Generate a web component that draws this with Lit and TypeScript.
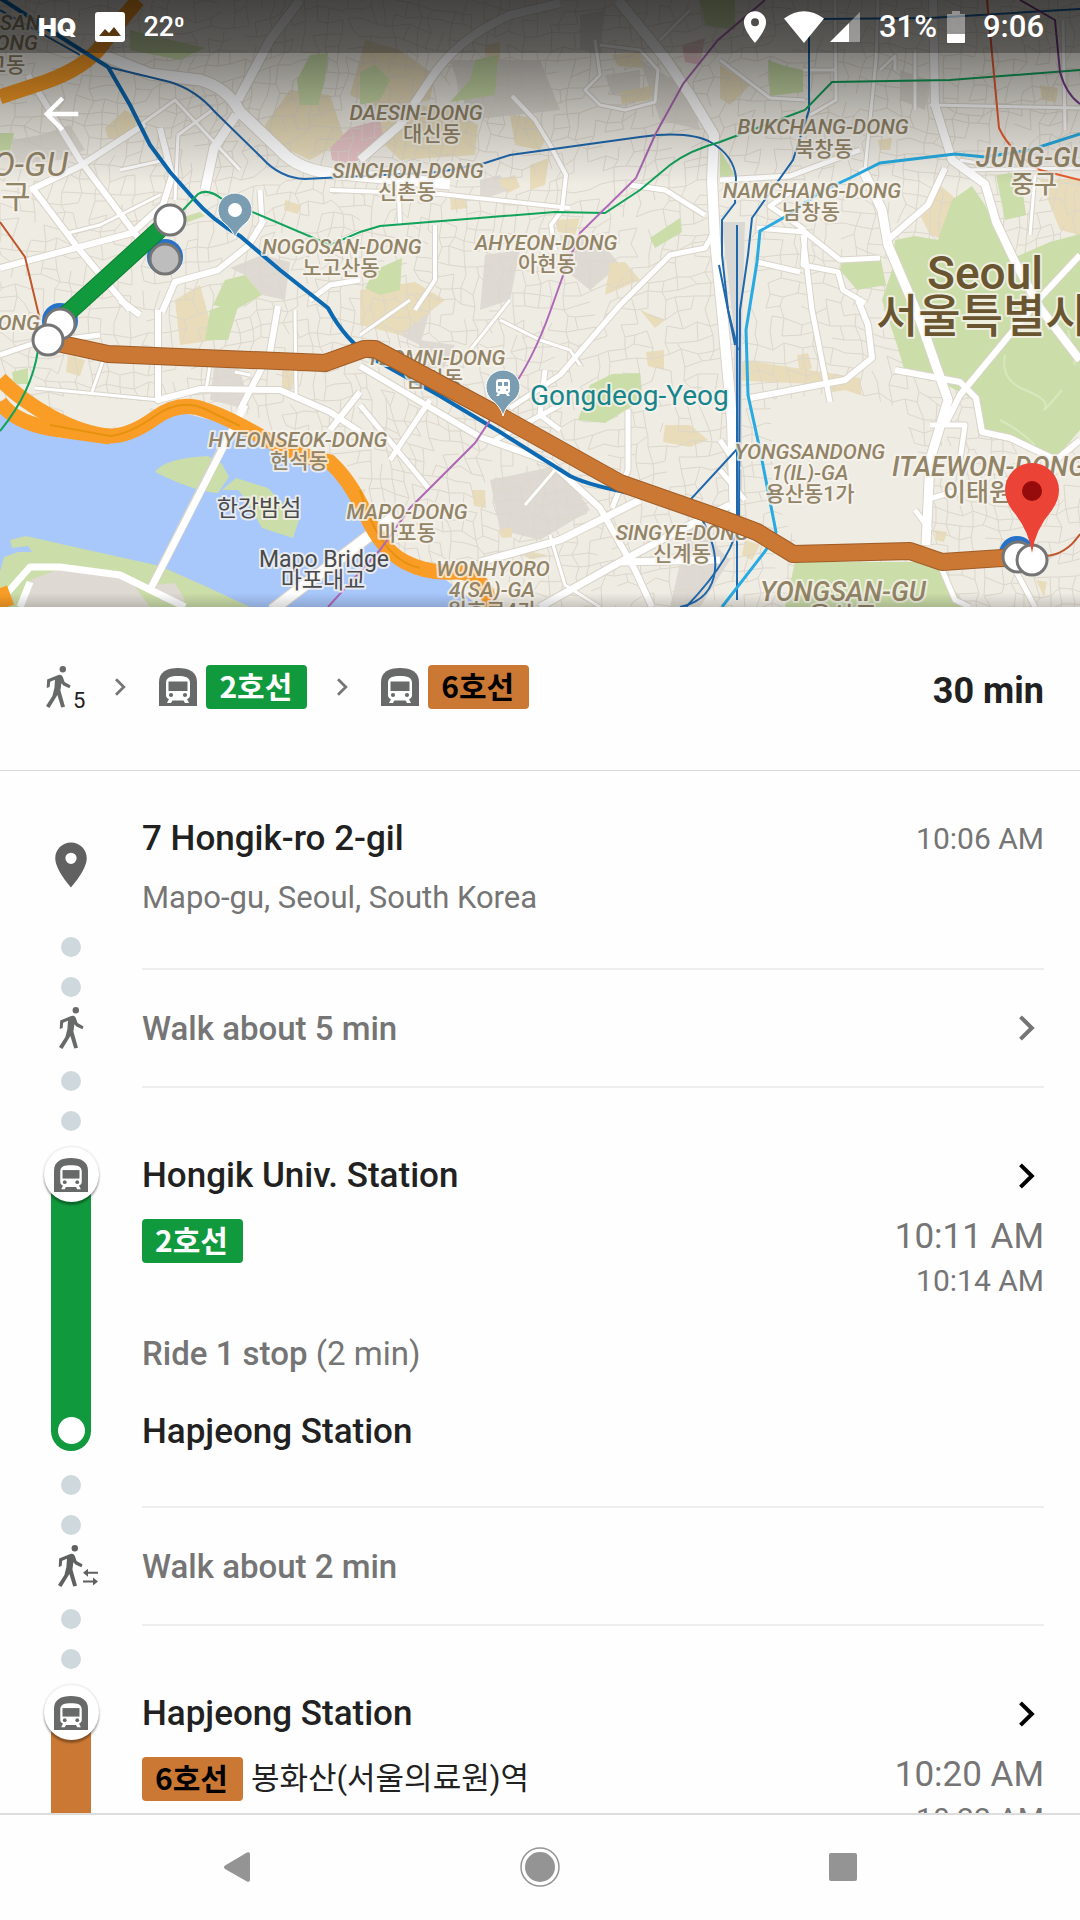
import { LitElement, html, svg, css, nothing } from "lit";
import { customElement, property } from "lit/decorators.js";

type Line = { name: string; tone: "green" | "orange" };
type Walk = { kind: "walk"; label: string; transfer: boolean; details: boolean };
type Ride = {
  kind: "ride";
  from: string;
  line: Line;
  headsign?: string;
  times: [string, string];
  stops?: string;
  duration?: string;
  to?: string;
};

const LINE_2: Line = { name: "2호선", tone: "green" };
const LINE_6: Line = { name: "6호선", tone: "orange" };

const STEPS: (Walk | Ride)[] = [
  { kind: "walk", label: "Walk about 5 min", transfer: false, details: true },
  {
    kind: "ride",
    from: "Hongik Univ. Station",
    line: LINE_2,
    times: ["10:11 AM", "10:14 AM"],
    stops: "Ride 1 stop",
    duration: "(2 min)",
    to: "Hapjeong Station",
  },
  { kind: "walk", label: "Walk about 2 min", transfer: true, details: false },
  {
    kind: "ride",
    from: "Hapjeong Station",
    line: LINE_6,
    headsign: "봉화산(서울의료원)역",
    times: ["10:20 AM", "10:22 AM"],
  },
];

const WALKER = svg`
  <circle cx="16.8" cy="3.2" r="3.2"></circle>
  <path d="M1.2 13.4 11 9.4Q15.6 7.8 16.8 11L18.6 16 24.6 19.6 23.4 22.2 17.4 19.4 15.4 17.2 14.4 24.6 19 40.8 15.2 41.4 11.4 29 3.4 42 0 40 6.4 30 8.4 22 9 13.8 4.2 15.8 3.6 21 .7 22Z"></path>`;

const walkIcon = html`<svg class="walker" viewBox="0 0 25 42" aria-hidden="true">${WALKER}</svg>`;

const transferIcon = html`<svg class="walker transfer" viewBox="0 0 40 42" aria-hidden="true">
  ${WALKER}
  <path d="M25 27.8 30 23.8V26.8H40V28.8H30V31.8ZM40 36.4 35 32.4V35.4H25V37.4H35V40.4Z"></path>
</svg>`;

const trainIcon = html`<svg class="train" viewBox="0 0 38 38" aria-hidden="true">
  <path d="M0 38V14C0 4 8 0 19 0S38 4 38 14V38Z"></path>
  <path class="cut" d="M7 27V15C7 9 12 8 19 8S31 9 31 15V27Q31 30 28 31L30 35H26L24.600 32.400H13.400L12 35H8L10 31Q7 30 7 27Z"></path>
  <rect x="9.500" y="13.500" width="19" height="9.500"></rect>
  <circle cx="12" cy="27" r="2.100"></circle>
  <circle cx="26" cy="27" r="2.100"></circle>
</svg>`;

const chevron = html`<svg class="chevron" viewBox="0 0 16 26" aria-hidden="true">
  <path d="M1.500 1.800 12.800 13 1.500 24.200"></path>
</svg>`;

const placePath =
  "M12 2C8.130 2 5 5.130 5 9c0 5.250 7 13 7 13s7-7.750 7-13c0-3.870-3.130-7-7-7zm0 9.500a2.500 2.500 0 1 1 0-5 2.500 2.500 0 0 1 0 5z";

/* Minor streets: a jittered lattice with some links left out. */
function minorStreets(): string {
  let seed = 7;
  const rnd = () => {
    seed = (seed * 16807) % 2147483647;
    return seed / 2147483647;
  };
  const step = 13;
  const cols = 90;
  const rows = 52;
  const pts: [number, number][][] = [];
  for (let r = 0; r < rows; r++) {
    pts.push([]);
    for (let c = 0; c < cols; c++) {
      const x = c * step - 30;
      const y = r * step - 30;
      const bend = Math.sin(x / 120) * 18 + Math.cos(y / 90) * 12;
      pts[r].push([
        Math.round(x + bend + (rnd() - 0.5) * 8),
        Math.round(y + Math.sin(x / 70) * 14 + (rnd() - 0.5) * 8),
      ]);
    }
  }
  let d = "";
  for (let r = 0; r < rows - 1; r++) {
    for (let c = 0; c < cols - 1; c++) {
      const [x, y] = pts[r][c];
      if (rnd() < 0.72) d += `M${x} ${y}L${pts[r][c + 1][0]} ${pts[r][c + 1][1]}`;
      if (rnd() < 0.72) d += `M${x} ${y}L${pts[r + 1][c][0]} ${pts[r + 1][c][1]}`;
    }
  }
  return d;
}

const STREETS = minorStreets();

const BLOCKS = [
  "M40 135 70 125 85 150 60 160 10 165 12 140Z",
  "M230 268 262 255 290 262 285 300 262 295 245 275Z",
  "M580 15 605 10 600 55 580 50Z",
  "M605 75 640 70 640 90 612 95Z",
  "M485 255 520 250 510 300 480 310Z",
  "M560 235 600 240 620 265 590 290 565 270Z",
  "M450 60 470 120 560 110 540 60Z",
  "M480 180 500 175 510 190 480 200Z",
  "M215 360 240 370 250 410 210 400Z",
  "M420 340 455 345 440 375 415 370Z",
  "M490 480 560 465 590 510 540 540 500 530Z",
  "M385 300 430 310 420 345 390 330Z",
  "M900 70 930 80 925 110 900 100Z",
  "M640 60 690 90 700 130 660 120Z",
  "M690 520 730 560 700 607 670 607Z",
];

const TAN = [
  "M105 128 125 110 138 118 130 138 108 138Z",
  "M290 90 330 95 345 140 310 160 268 140 265 125Z",
  "M365 40 400 50 435 75 430 100 385 110 350 95Z",
  "M372 125 420 105 450 110 478 125 475 155 400 160 380 140Z",
  "M485 45 500 42 500 62 487 60Z",
  "M510 115 535 118 548 135 540 150 515 145Z",
  "M530 165 549 158 545 185 530 190 530 178Z",
  "M498 180 515 175 520 187 508 193Z",
  "M450 197 465 199 468 208 451 210Z",
  "M555 220 580 218 575 235 558 232Z",
  "M612 55 640 52 643 68 618 66Z",
  "M620 92 655 85 650 100 622 104Z",
  "M720 65 750 85 730 105 720 98Z",
  "M940 185 957 200 945 240 930 235 920 215Z",
  "M1040 180 1080 178 1080 235 1060 230Z",
  "M1040 85 1058 88 1056 102 1042 100Z",
  "M878 140 892 138 890 150 880 150Z",
  "M175 300 200 285 215 340 180 345Z",
  "M360 290 415 282 445 300 400 335 360 325Z",
  "M285 200 301 205 298 214 284 210Z",
  "M282 370 298 372 290 392 282 388Z",
  "M68 355 85 360 80 376 66 372Z",
  "M640 310 665 320 655 328Z",
  "M646 352 664 350 664 370 648 366Z",
  "M665 425 690 425 708 440 690 447 663 442Z",
  "M730 380 745 360 860 378 862 400 850 408 832 398 830 385Z",
  "M797 355 808 353 812 368 800 374Z",
  "M890 425 905 428 903 440 893 437Z",
  "M472 490 485 490 486 508 474 506Z",
  "M498 530 512 527 512 537 502 538Z",
  "M520 550 548 555 530 560Z",
  "M935 530 947 532 944 542 936 540Z",
  "M1036 580 1047 582 1044 597Z",
  "M745 540 760 545 752 560 742 555Z",
  "M610 263 625 262 640 280 605 295Z",
];

const PARKS = [
  "M895 240 915 236 938 240 952 200 972 186 985 205 1000 240 1018 256 1050 242 1080 234 1080 430 1056 458 1030 445 1000 433 982 430 972 398 940 382 905 372 897 345 882 300 892 270Z",
  "M795 562 930 562 945 575 965 607 785 607Z",
  "M130 30 205 48 180 60 130 50Z",
  "M310 55 328 53 325 80 318 105 300 105 297 80Z",
  "M225 280 245 275 262 295 235 310 213 305Z",
  "M360 72 375 65 390 80 380 100 360 105Z",
  "M475 60 498 55 495 95 450 102 470 80Z",
  "M375 270 402 258 400 290 380 295 365 288Z",
  "M650 238 680 218 682 232 655 248Z",
  "M700 0 735 0 735 30 705 25Z",
  "M768 60 785 66 803 70 803 92 770 96Z",
  "M842 262 880 255 886 285 857 290 840 270Z",
  "M996 175 1020 172 1026 215 1005 220Z",
  "M590 385 612 374 640 373 642 400 605 423 578 420Z",
  "M0 133 14 133 10 152 0 152Z",
  "M12 372 28 368 28 384 14 384Z",
  "M210 310 240 300 228 340 205 340Z",
  "M720 150 735 175 720 178Z",
  "M180 218 200 212 205 216 188 222Z",
];

const ROADS: [number, string][] = [
  [11, "M95 52 150 74 200 80Q228 88 240 112L280 150Q300 172 340 174L450 184"],
  [9, "M238 100 270 40 300 0M236 115 214 148 205 190"],
  [6, "M28 75 80 160 140 240M30 190 80 166 145 124M34 190 78 248 130 310"],
  [6, "M0 268 72 249 132 233 163 205 172 176 160 128M162 312 175 282 218 270 248 246 264 220"],
  [3, "M140 125 175 100 240 170M178 135 215 108M120 170 165 160M178 135 175 200M68 233 100 225 160 195"],
  [8, "M360 160 400 125 430 80Q455 40 510 15L560 3"],
  [10, "M618 0 665 58 690 95 714 135 712 180 715 240 722 310 732 420 735 520"],
  [4, "M512 96 535 120 550 145 566 175 562 210 551 225 555 250"],
  [4, "M330 190 440 194 570 208M398 170 400 224M435 225 435 280 415 310M330 245 360 232"],
  [5, "M630 185 665 190 705 215M714 232 705 248 670 255 620 305 560 375 510 408"],
  [3, "M595 40 600 75 585 90 600 105 625 110 655 102 658 70 640 50 600 45M660 40 690 10"],
  [8, "M933 0 935 105 952 160 985 184 996 222 1015 262 1040 308 1080 360"],
  [9, "M862 168 882 210 888 245 920 320 948 400 930 460 926 545"],
  [6, "M890 238 928 205 945 168M1080 255 1040 298 960 395 945 425"],
  [5, "M720 180 790 176 860 150M805 230 770 206 800 185M757 228 805 232 840 260 880 258"],
  [3, "M835 0 836 100 810 115M878 0 876 60 865 170M915 50 915 110M960 170 1080 168M1063 20 1065 130M930 105 1080 108"],
  [3, "M720 60 770 98 805 100M880 70 895 56 895 70M803 70 835 70M960 160 990 165M1035 175 1030 235"],
  [6, "M895 370 960 382 976 398 982 432 1010 438 1056 460 1080 440M750 398 845 380 872 358 868 325 858 300"],
  [5, "M803 235 812 310 830 402M805 232 803 265 838 272 843 290 865 303M757 262 800 272"],
  [6, "M360 366 480 437 550 462 600 508 635 570 652 607"],
  [7, "M540 607 620 562 680 530 730 505M480 562 560 540 640 500M620 562 720 560"],
  [5, "M495 440 560 405M628 410 628 470 612 508M545 370 540 415 560 430M360 405 430 490M390 460 430 400"],
  [3, "M550 535 565 585 600 607M525 505 555 470M360 335 410 300M510 300 470 350M500 320 540 340 570 350 580 365"],
  [6, "M158 310 158 400 200 389 280 390 330 412 360 432M278 306 270 352 240 410M120 300 140 315M360 392 330 430"],
  [3, "M105 355 92 392M35 388 160 400M295 310 296 395M210 365 206 390M250 375 235 372"],
  [5, "M0 355 35 343 100 335M720 470 745 500M925 500 960 490M930 530 915 510M938 560 955 600 970 607M1010 560 1035 607"],
  [5, "M930 425 965 425 960 460M720 440 740 470M260 190 262 222M310 300 330 285 360 280"],
];

const LABELS: [string, number, number, string][] = [
  ["DAESIN-DONG", 416, 120, "small"],
  ["대신동", 432, 141, "hangul"],
  ["SINCHON-DONG", 408, 178, "small"],
  ["신촌동", 407, 199, "hangul"],
  ["NOGOSAN-DONG", 342, 254, "small"],
  ["노고산동", 341, 275, "hangul"],
  ["AHYEON-DONG", 546, 250, "small"],
  ["아현동", 547, 271, "hangul"],
  ["BUKCHANG-DONG", 823, 134, "small"],
  ["북창동", 824, 156, "hangul"],
  ["NAMCHANG-DONG", 812, 198, "small"],
  ["남창동", 811, 219, "hangul"],
  ["JUNG-GU", 1032, 167, "mid"],
  ["중구", 1034, 193, "hangul mid-hangul"],
  ["DONG", 12, 330, "small"],
  ["SAN", 20, 30, "small"],
  ["DONG", 10, 50, "small"],
  ["교동", 6, 72, "hangul"],
  ["YEOMNI-DONG", 436, 365, "small"],
  ["염리동", 434, 386, "hangul"],
  ["HYEONSEOK-DONG", 298, 447, "small"],
  ["현석동", 299, 468, "hangul"],
  ["MAPO-DONG", 407, 519, "small"],
  ["마포동", 407, 540, "hangul"],
  ["WONHYORO", 493, 576, "small"],
  ["4(SA)-GA", 492, 597, "small"],
  ["원효로4가", 492, 618, "hangul"],
  ["SINGYE-DONG", 682, 540, "small"],
  ["신계동", 682, 561, "hangul"],
  ["YONGSANDONG", 810, 459, "small"],
  ["1(IL)-GA", 810, 480, "small"],
  ["용산동1가", 810, 501, "hangul"],
  ["YONGSAN-GU", 843, 601, "mid"],
  ["용산구", 843, 625, "hangul mid-hangul"],
  ["ITAEWON-DONG", 989, 476, "mid"],
  ["이태원동", 989, 501, "hangul mid-hangul"],
];

@customElement("route-map")
export class RouteMap extends LitElement {
  static styles = css`
    :host { display: block; }
    .map {
      display: block;
      width: 100%;
      aspect-ratio: 1080 / 607;
      background: #efece4;
      font-family: Roboto, "Noto Sans CJK KR", sans-serif;
    }
    .fine { fill: none; stroke: #ddd7cc; stroke-width: 1; }
    .block { fill: #dedad3; }
    .tan { fill: #e8dcba; }
    .park { fill: #cbdda9; }
    .bank { fill: #cbdda9; }
    .trail { fill: none; stroke: #d8e8bd; stroke-width: 2; }
    .water { fill: #a8c7fb; }
    .casing { fill: none; stroke: #d9d4ca; stroke-linejoin: round; }
    .road { fill: none; stroke: #ffffff; stroke-linejoin: round; }
    .highway { fill: none; stroke: #fa9d27; stroke-width: 15; }
    .edge { fill: none; stroke: #e5920f; stroke-width: 2; }
    .rail { fill: none; stroke: #1f68ad; stroke-width: 2; }
    .main { stroke: #0c6ab3; stroke-width: 4; }
    .cyan { stroke: #27abe2; stroke-width: 3; }
    .leaf { stroke: #12a35b; }
    .violet { stroke: #ae69b6; }
    .plum { stroke: #7c3f8a; }
    .rust { stroke: #c0562c; }
    .flame { stroke: #ea5c30; }
    .label { fill: #928467; stroke: #f7f4ee; stroke-width: 4; stroke-opacity: 0.8; paint-order: stroke; text-anchor: middle; stroke-linejoin: round; }
    .small { font-size: 21px; font-style: italic; font-weight: 500; }
    .hangul { font-size: 21px; font-weight: 500; }
    .mid { font-size: 27px; font-style: italic; font-weight: 500; }
    .mid-hangul { font-size: 25px; }
    .gu { font-size: 34px; font-style: italic; }
    .gu-hangul { font-size: 32px; }
    .city { font-size: 46px; font-weight: 500; fill: #695530; }
    .city-hangul { font-size: 46px; text-anchor: start; }
    .place { font-size: 23px; fill: #4a4a4d; }
    .stop { font-size: 28px; fill: #16858c; text-anchor: start; }
    .route { fill: none; stroke-width: 16; stroke-linejoin: round; }
    .route-edge { fill: none; stroke-width: 18; stroke-linejoin: round; }
    .green { stroke: #11993d; }
    .green-edge { stroke: #0c7f31; }
    .orange { stroke: #ca7834; }
    .orange-edge { stroke: #a05c25; }
    .halo { fill: #2672c8; }
    .node { fill: #fff; stroke: #757575; stroke-width: 3; }
    .idle { fill: #bdbdbd; }
    .pin { fill: #7b9db1; stroke: #fff; stroke-width: 1; }
    .white { fill: #fff; }
    .slate { fill: #7b9db1; }
    .dest { fill: #eb4335; }
    .core { fill: #960b0b; }
  `;

  render() {
    return html`<svg class="map" viewBox="0 0 1080 607" preserveAspectRatio="xMidYMid slice" role="img" aria-label="Route map">
      <defs>
        <linearGradient id="shade" x1="0" y1="0" x2="0" y2="1">
          <stop offset="0" stop-color="#000" stop-opacity=".6"></stop>
          <stop offset=".3" stop-color="#000" stop-opacity=".45"></stop>
          <stop offset=".6" stop-color="#000" stop-opacity=".22"></stop>
          <stop offset="1" stop-color="#000" stop-opacity="0"></stop>
        </linearGradient>
        <linearGradient id="foot" x1="0" y1="0" x2="0" y2="1">
          <stop offset="0" stop-color="#000" stop-opacity="0"></stop>
          <stop offset="1" stop-color="#000" stop-opacity=".16"></stop>
        </linearGradient>
      </defs>
      ${BLOCKS.map((d) => svg`<path class="block" d=${d}></path>`)}
      ${TAN.map((d) => svg`<path class="tan" d=${d}></path>`)}
      <path d="M330 148 350 128 380 120 385 145 350 165 332 160Z" fill="#e6c3c6"></path>
      <path d="M682 45 705 38 700 65 685 62Z" fill="#e6c3c6"></path>
      <path class="fine" d=${STREETS}></path>
      ${PARKS.map((d) => svg`<path class="park" d=${d}></path>`)}
      <path d="M770 402 845 390 900 408 925 470 922 545 800 550 775 500Z" fill="#efece4"></path>
      <path d="M65 395 150 402 135 418 105 430 75 420Z" fill="#efece4"></path>
      <path d="M722 222 745 222 742 330 742 500 734 500 734 330Z" fill="#d9d8d4"></path>
      <path class="trail" d="M1005 355Q1000 380 1025 390T1045 408T1062 390M1000 420Q1020 430 1035 445M1068 330 1075 365"></path>
      <path class="water" d="M0 400 20 425 60 438 110 440 140 425 180 412 230 425 270 446 320 460 345 485 370 530 400 560 440 575 480 607 0 607Z"></path>
      <path class="bank" d="M0 572 4 557 18 552 32 552 28 546 12 548 10 540 26 536 70 546 160 566 205 586 250 607 0 607Z"></path>
      <path class="block" d="M30 580 70 565 130 580 150 607 20 607ZM155 585 175 583 185 600 180 607 160 600Z"></path>
      <path class="bank" d="M155 472Q165 458 208 456L222 464 229 477 218 493Q195 492 155 472Z"></path>
      <path class="bank" d="M222 490 236 478 268 488 299 520 293 538 262 528 246 500 238 490Z"></path>
      ${ROADS.map(([w, d]) => svg`<path class="casing" stroke-width=${w + 2} d=${d}></path>`)}
      ${ROADS.map(([w, d]) => svg`<path class="road" stroke-width=${w} d=${d}></path>`)}
      <path class="casing" stroke-width="9" d="M225 442 150 590"></path>
      <path class="road" stroke-width="7" d="M245 405 150 590M8 592 30 567 60 567 120 575 185 607M30 582 20 607"></path>
      <path class="casing" stroke-width="13" d="M272 610 390 520"></path>
      <path class="road" stroke-width="11" d="M272 610 395 516"></path>
      <path class="highway" d="M0 379Q20 400 52 417T110 436Q130 436 155 418T205 410Q225 416 260 436T330 462Q350 480 366 515T405 562 455 572 492 607"></path>
      <path class="highway" stroke-width="9" d="M0 402Q15 424 60 430L110 437"></path>
      <path class="highway" d="M0 97 45 82Q85 68 102 45T138 0M0 588 7 607"></path>
      <path class="edge" d="M50 425 110 436Q130 434 155 416T205 409L240 426M360 490Q380 560 420 568"></path>
      <path class="rail main" d="M0 -2 70 43 108 67 130 105 150 145 170 172 193 198Q212 220 240 236L280 270 328 308Q345 340 372 358L440 396 500 432 570 476Q590 486 640 495"></path>
      <path class="rail" d="M0 10 80 55M108 67 170 82Q196 90 215 112L262 158Q280 178 305 179L440 172 485 163 510 155 640 137Q690 130 712 143T736 178L735 203 722 220 722 255 728 310 738 350"></path>
      <path class="rail" d="M809 35V110L793 160 752 218 748 255 740 310 739 518Q736 555 686 607M737 225 737 600M719 265 735 345M820 19 930 18 1080 9"></path>
      <path class="rail" d="M738 448 690 500Q718 540 715 570T680 607"></path>
      <path class="rail cyan" d="M1080 134 1030 150 985 157 955 154 880 163 850 178 820 192 790 214 760 231 757 262 746 330 748 395 760 450 776 532 766 550 722 607"></path>
      <path class="rail leaf" d="M183 210 198 194Q208 188 222 199L330 245 360 232 380 226 555 212 605 213 640 190 670 165Q690 150 720 142L805 110 832 82 950 80 1080 70M38 350Q32 392 0 431"></path>
      <path class="rail violet" d="M765 0 718 40 683 84 655 135 636 178 580 233 565 270 550 312Q530 368 500 405L475 443 410 508 380 550 328 607"></path>
      <path class="rail plum" d="M1020 0 1055 20 1060 72Q1066 94 1080 104"></path>
      <path class="rail rust" d="M0 222 25 257 40 320M1045 556Q1066 555 1080 534"></path>
      <path class="rail flame" d="M987 0 999 128Q1010 152 1040 170L1080 180"></path>

      ${LABELS.map(([t, x, y, c]) => svg`<text class="label ${c}" x=${x} y=${y}>${t}</text>`)}
      <text class="label gu" x="30" y="176">O-GU</text>
      <text class="label gu-hangul" x="16" y="208">구</text>
      <text class="label city" x="985" y="289">Seoul</text>
      <text class="label city city-hangul" x="876" y="332">서울특별시</text>
      <text class="label place" x="259" y="516">한강밤섬</text>
      <text class="label place" x="324" y="567">Mapo Bridge</text>
      <text class="label place" x="323" y="588">마포대교</text>
      <text class="label stop" x="530" y="405">Gongdeog-Yeog</text>

      <circle class="halo" cx="165" cy="257" r="18"></circle>
      <circle class="halo" cx="60" cy="321" r="18"></circle>
      <circle class="halo" cx="1017" cy="554" r="18"></circle>
      <path class="route-edge green-edge" d="M60 320 170 220"></path>
      <path class="route green" d="M60 320 170 220"></path>
      <path class="route-edge orange-edge" d="M48 341 108 354 325 363 364 349 375 349 500 416 620 483 720 518 757 532 793 554 910 551 942 562 1017 557"></path>
      <path class="route orange" d="M48 341 108 354 325 363 364 349 375 349 500 416 620 483 720 518 757 532 793 554 910 551 942 562 1017 557"></path>
      <circle class="node" cx="170" cy="220" r="15"></circle>
      <circle class="node idle" cx="165" cy="259" r="15"></circle>
      <circle class="node" cx="60" cy="324" r="15"></circle>
      <circle class="node" cx="48" cy="340" r="15"></circle>
      <circle class="node" cx="1018" cy="557" r="15"></circle>
      <circle class="node" cx="1032" cy="560" r="15"></circle>

      <path class="pin" d="M235 238Q233 230 224 223A17 17 0 1 1 246 223Q237 230 235 238Z"></path>
      <circle class="white" cx="235" cy="210" r="7"></circle>
      <path class="pin" d="M503 416Q501 407 492 400A17 17 0 1 1 514 400Q505 407 503 416Z"></path>
      <path class="white" d="M496 382Q496 379 499 379H507Q510 379 510 382V391Q510 393 508 393L510 396H507L506 394H500L499 396H496L498 393Q496 393 496 391Z"></path>
      <path class="slate" d="M498 382H502V386H498ZM504 382H508V386H504Z"></path>
      <circle class="slate" cx="499" cy="390" r="1"></circle>
      <circle class="slate" cx="507" cy="390" r="1"></circle>
      <path class="dest" d="M1032 553Q1029 530 1012 510Q1005 500 1005 490A27 27 0 0 1 1059 490Q1059 500 1052 510Q1035 530 1032 553Z"></path>
      <circle class="core" cx="1032" cy="491" r="10"></circle>

      <rect x="0" y="0" width="1080" height="185" fill="url(#shade)"></rect>
      <rect x="0" y="593" width="1080" height="14" fill="url(#foot)"></rect>
    </svg>`;
  }
}

@customElement("line-badge")
export class LineBadge extends LitElement {
  @property({ attribute: false }) line: Line = LINE_2;
  static styles = css`
    :host { display: block; flex: none; }
    .badge {
      display: block;
      padding: 0 15px 4px 13px;
      border-radius: 4px;
      font: 700 30px/40px "Noto Sans CJK KR", sans-serif;
    }
    .green { background: #11993d; color: #fff; }
    .orange { background: #ca7834; color: #000; }
  `;
  render() {
    return html`<span class="badge ${this.line.tone}">${this.line.name}</span>`;
  }
}

@customElement("app-root")
export class AppRoot extends LitElement {
  static styles = css`
    :host {
      display: flex;
      flex-direction: column;
      height: 100vh;
      background: #fefefe;
      color: #212121;
      font-family: Roboto, "Noto Sans CJK KR", sans-serif;
    }
    button {
      display: grid;
      place-items: center;
      flex: none;
      margin: 0;
      padding: 0;
      border: 0;
      background: none;
      color: inherit;
      font: inherit;
      cursor: pointer;
    }
    svg { display: block; fill: currentColor; }

    .hero { display: grid; flex: none; }
    .canvas, .overlay { grid-area: 1 / 1; }
    .overlay { color: #fff; z-index: 1; }
    .status {
      display: flex;
      align-items: center;
      height: 53px;
      padding: 0 36px 0 38px;
      box-sizing: border-box;
      background: rgba(0, 0, 0, 0.28);
      font-size: 31px;
      font-weight: 500;
    }
    .brand { font: 900 25px/32px Inter, sans-serif; }
    .photo { width: 30px; height: 30px; margin-left: 19px; }
    .degrees { margin-left: 18px; font-size: 27px; }
    .spacer { flex: 1; }
    .locate { width: 38px; height: 38px; }
    .wifi { width: 40px; height: 32px; margin-left: 10px; }
    .signal { width: 30px; height: 30px; margin-left: 6px; }
    .percent { margin-left: 19px; }
    .battery { width: 18px; height: 32px; margin: 0 18px 0 10px; }
    .back { width: 56px; height: 56px; margin: 33px 0 0 33px; }
    .back svg { width: 52px; height: 52px; }

    .summary {
      display: flex;
      align-items: center;
      flex: none;
      height: 163px;
      padding: 0 36px 0 46px;
      border-bottom: 1px solid #dbdbdb;
    }
    .legs { display: flex; align-items: center; flex: 1; padding-bottom: 4px; }
    .walker { width: 25px; height: 42px; color: #686a69; }
    .transfer { width: 40px; color: #5f6060; }
    .train { width: 38px; height: 38px; color: #686a69; }
    .cut { fill: #fff; }
    .minutes { align-self: flex-end; margin-left: 2px; font-size: 22px; line-height: 16px; }
    .chevron { width: 16px; height: 26px; fill: none; stroke: currentColor; stroke-width: 4; }
    .legs .chevron { width: 11px; height: 18px; margin: 0 33px 0 30px; color: #757575; }
    .legs line-badge { margin-left: 9px; }
    .total { padding-top: 4px; font-size: 36px; font-weight: 700; line-height: 44px; }

    .steps { flex: 1; min-height: 0; margin: 0; padding: 0; list-style: none; overflow-y: auto; scrollbar-width: none; }
    .step { display: grid; grid-template-columns: 142px 1fr; padding-right: 36px; }
    .rail { display: flex; flex-direction: column; align-items: center; }
    .dot { display: grid; place-items: center; width: 40px; height: 40px; }
    .dot::before { content: ""; width: 20px; height: 20px; border-radius: 50%; background: #cfd8dd; }

    .origin { min-height: 156px; }
    .origin .rail { padding-top: 67px; color: #616161; }
    .place { width: 54px; height: 54px; }
    .origin .content { display: flex; justify-content: space-between; align-items: flex-start; padding-top: 46px; }
    .title { margin: 0; font-size: 35px; font-weight: 500; line-height: 44px; }
    .subtitle { margin: 17px 0 0; font-size: 31px; line-height: 40px; color: #757575; }
    .time { font-size: 30px; line-height: 44px; color: #757575; text-align: right; }
    .time.large { font-size: 35px; }

    .walk .figure { display: flex; height: 54px; }
    .walk .figure .transfer { margin-left: 14px; }
    .walk .content {
      display: flex;
      align-items: center;
      justify-content: space-between;
      height: 116px;
      margin: 41px 0 53px;
      border: solid #eee;
      border-width: 2px 0;
      color: #757575;
    }
    .label { padding-top: 2px; font-size: 33px; font-weight: 500; line-height: 40px; }
    .more { width: 16px; height: 44px; margin-right: 9px; }
    .more.strong { color: #000; }

    .ride { min-height: 324px; }
    .ride .rail { display: grid; align-items: stretch; justify-items: center; }
    .bar {
      grid-area: 1 / 1;
      display: flex;
      align-items: flex-end;
      justify-content: center;
      width: 40px;
      margin: 34px 0 14px;
      border-radius: 0 0 20px 20px;
    }
    .bar.green { background: #11993d; }
    .bar.orange { background: #ca7834; }
    .end { width: 27px; height: 27px; margin-bottom: 7px; border-radius: 50%; background: #fff; }
    .node {
      grid-area: 1 / 1;
      align-self: start;
      display: grid;
      place-items: center;
      width: 55px;
      height: 55px;
      margin-top: 6px;
      border-radius: 50%;
      background: #fff;
      box-shadow: 0 3px 2px rgba(0, 0, 0, 0.3), 0 0 3px rgba(0, 0, 0, 0.18);
    }
    .node .train { width: 34px; height: 34px; }
    .ride .content { padding: 13px 0 10px; }
    .head, .line { display: flex; justify-content: space-between; align-items: flex-start; }
    .via { display: flex; align-items: center; gap: 8px; padding-top: 21px; }
    .headsign { font-size: 31px; line-height: 44px; }
    .times { display: flex; flex-direction: column; padding-top: 17px; }
    .stops { margin: 31px 0 36px; font-size: 33px; line-height: 40px; color: #757575; }
    .stops b { font-weight: 500; }

    .nav {
      display: flex;
      align-items: center;
      justify-content: space-around;
      flex: none;
      height: 103px;
      padding: 0 85px 2px;
      border-top: 2px solid #ddd;
      background: #fefefe;
      color: #949494;
    }
    .nav button { width: 80px; height: 80px; }
    .nav svg { width: 40px; height: 40px; }
  `;

  private renderWalk(step: Walk) {
    return html`<li class="step walk">
      <div class="rail">
        <span class="dot"></span>
        <span class="dot"></span>
        <span class="figure">${step.transfer ? transferIcon : walkIcon}</span>
        <span class="dot"></span>
        <span class="dot"></span>
      </div>
      <div class="content">
        <span class="label">${step.label}</span>
        ${step.details ? html`<button class="more" aria-label="Walking details">${chevron}</button>` : nothing}
      </div>
    </li>`;
  }

  private renderRide(step: Ride) {
    return html`<li class="step ride">
      <div class="rail">
        <span class="bar ${step.line.tone}">${step.to ? html`<span class="end"></span>` : nothing}</span>
        <span class="node">${trainIcon}</span>
      </div>
      <div class="content">
        <div class="head">
          <h2 class="title">${step.from}</h2>
          <button class="more strong" aria-label="Station details">${chevron}</button>
        </div>
        <div class="line">
          <div class="via">
            <line-badge .line=${step.line}></line-badge>
            ${step.headsign ? html`<span class="headsign">${step.headsign}</span>` : nothing}
          </div>
          <div class="times">
            <time class="time large">${step.times[0]}</time>
            <time class="time">${step.times[1]}</time>
          </div>
        </div>
        ${step.stops ? html`<p class="stops"><b>${step.stops}</b> ${step.duration}</p>` : nothing}
        ${step.to ? html`<h2 class="title">${step.to}</h2>` : nothing}
      </div>
    </li>`;
  }

  render() {
    return html`
      <header class="hero">
        <route-map class="canvas"></route-map>
        <div class="overlay">
          <div class="status">
            <span class="brand">HQ</span>
            <svg class="photo" viewBox="0 0 30 30" aria-hidden="true">
              <path fill-rule="evenodd" d="M3 0H27Q30 0 30 3V27Q30 30 27 30H3Q0 30 0 27V3Q0 0 3 0ZM4 24H26L19 15 14 21 10 17Z"></path>
            </svg>
            <span class="degrees">22⁰</span>
            <span class="spacer"></span>
            <svg class="locate" viewBox="0 0 24 24" aria-hidden="true"><path d=${placePath}></path></svg>
            <svg class="wifi" viewBox="0 0 40 32" aria-hidden="true">
              <path d="M0 7.500Q20-7 40 7.500L20 32Z"></path>
            </svg>
            <svg class="signal" viewBox="0 0 30 30" aria-hidden="true">
              <path d="M30 0V30H19V11Z" opacity=".4"></path>
              <path d="M19 11V30H0Z"></path>
            </svg>
            <span class="percent">31%</span>
            <svg class="battery" viewBox="0 0 18 32" aria-hidden="true">
              <path d="M5 0H13V3H18V23H0V3H5Z" opacity=".4"></path>
              <path d="M0 23H18V31Q18 32 17 32H1Q0 32 0 31Z"></path>
            </svg>
            <span>9:06</span>
          </div>
          <button class="back" aria-label="Back">
            <svg viewBox="0 0 24 24" aria-hidden="true">
              <path d="M20 11H7.830l5.590-5.590L12 4l-8 8 8 8 1.410-1.410L7.830 13H20v-2z"></path>
            </svg>
          </button>
        </div>
      </header>

      <section class="summary">
        <div class="legs">
          ${walkIcon}<span class="minutes">5</span>
          ${chevron}${trainIcon}<line-badge .line=${LINE_2}></line-badge>
          ${chevron}${trainIcon}<line-badge .line=${LINE_6}></line-badge>
        </div>
        <span class="total">30 min</span>
      </section>

      <ol class="steps">
        <li class="step origin">
          <div class="rail">
            <svg class="place" viewBox="0 0 24 24" aria-hidden="true"><path d=${placePath}></path></svg>
          </div>
          <div class="content">
            <div>
              <h2 class="title">7 Hongik-ro 2-gil</h2>
              <p class="subtitle">Mapo-gu, Seoul, South Korea</p>
            </div>
            <time class="time">10:06 AM</time>
          </div>
        </li>
        ${STEPS.map((s) => (s.kind === "walk" ? this.renderWalk(s) : this.renderRide(s)))}
      </ol>

      <nav class="nav">
        <button aria-label="Back">
          <svg viewBox="0 0 40 40" aria-hidden="true"><path d="M8 18.500 30 5.500Q33 4.500 33 7V33Q33 35.500 30 34.500L8 22Q6 20.200 8 18.500Z"></path></svg>
        </button>
        <button aria-label="Home">
          <svg viewBox="0 0 40 40" aria-hidden="true">
            <circle cx="20" cy="20" r="15"></circle>
            <circle cx="20" cy="20" r="19" fill="none" stroke="currentColor" stroke-width="1.500"></circle>
          </svg>
        </button>
        <button aria-label="Recent apps">
          <svg viewBox="0 0 40 40" aria-hidden="true"><rect x="6" y="6" width="28" height="28" rx="2"></rect></svg>
        </button>
      </nav>
    `;
  }
}
